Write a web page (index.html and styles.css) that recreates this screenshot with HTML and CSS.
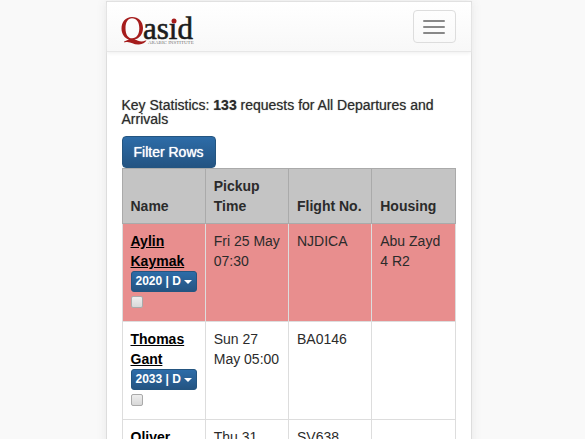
FILE: index.html
```html
<!DOCTYPE html>
<html lang="en">
<head>
<meta charset="utf-8">
<meta name="viewport" content="width=device-width, initial-scale=1">
<title>Qasid – Departures and Arrivals</title>
<link rel="stylesheet" href="styles.css">
</head>
<body>
<div class="page">
  <header class="navbar">
    <a class="brand" href="#" aria-label="Qasid Arabic Institute">
      <svg class="logo" viewBox="0 0 76 34" aria-hidden="true">
        <path class="logo-red" fill-rule="evenodd" d="M11 3C4.500 3 0.500 8 0.500 14.500C0.500 20 3.500 24.300 8 25.500C6 26 5 27 3 27.500L3.500 28.500C9 26.500 12 31 18 30.500C21.500 30.200 24 28.500 25.500 26.500L24.500 26.500C20 29 17 26.500 13.500 25.500C18.500 24.500 22 20 22 14C22 7.500 17.500 3 11 3ZM11 4.300C15.500 4.300 18.300 8 18.300 14.300C18.300 20.500 15.500 24.300 11.200 24.300C7 24.300 4.500 20.500 4.500 14.200C4.500 8 7 4.300 11 4.300Z"/>
        <text class="logo-name" x="22" y="25">asıd</text>
        <circle class="logo-red" cx="53" cy="7" r="2.500"/>
        <text class="logo-sub" x="27" y="30">ARABIC INSTITUTE</text>
      </svg>
    </a>
    <button class="toggle" type="button" aria-label="Toggle navigation">
      <span class="bar"></span><span class="bar"></span><span class="bar"></span>
    </button>
  </header>
  <main class="content">
    <h5 class="stats">Key Statistics: <strong>133</strong> requests for All Departures and Arrivals</h5>
    <button class="btn" type="button">Filter Rows</button>
    <table class="requests">
      <thead>
        <tr><th>Name</th><th>Pickup Time</th><th>Flight No.</th><th>Housing</th></tr>
      </thead>
      <tbody>
        <tr class="alert">
          <td><a class="name" href="#">Aylin Kaymak</a>
            <button class="btn btn-small" type="button">2020 | D <span class="caret"></span></button>
            <input class="check" type="checkbox" aria-label="Select Aylin Kaymak"></td>
          <td>Fri 25 May 07:30</td><td>NJDICA</td><td>Abu Zayd 4 R2</td>
        </tr>
        <tr>
          <td><a class="name" href="#">Thomas Gant</a>
            <button class="btn btn-small" type="button">2033 | D <span class="caret"></span></button>
            <input class="check" type="checkbox" aria-label="Select Thomas Gant"></td>
          <td>Sun 27 May 05:00</td><td>BA0146</td><td></td>
        </tr>
        <tr>
          <td><a class="name" href="#">Oliver</a></td>
          <td>Thu 31</td><td>SV638</td><td></td>
        </tr>
      </tbody>
    </table>
  </main>
</div>
</body>
</html>
```
FILE: styles.css
```css
* { box-sizing: border-box; }

html { height: 100%; overflow: hidden; }

body {
  height: 100%;
  margin: 0;
  padding: 1px 8px 0 0;
  overflow: hidden;
  background: #f9f9f9;
  color: #2b2b2b;
  font: 14px/20px "Liberation Sans", Arial, sans-serif;
}

.page {
  max-width: 366px;
  min-height: 100%;
  margin: 0 auto;
  background: #fff;
  border: 1px solid #ddd;
  box-shadow: 0 0 10px #e8e8e8;
}

.navbar {
  display: flex;
  justify-content: space-between;
  align-items: center;
  height: 50px;
  padding: 0 15px 0 14px;
  background: linear-gradient(#fff, #f8f8f8);
  border-bottom: 1px solid #e7e7e7;
  box-shadow: 0 1px 4px #eee;
}

.brand { display: block; padding-top: 9px; }
.logo { display: block; width: 76px; height: 34px; overflow: visible; }
.logo-red { fill: #a51c1c; }
.logo-name { font: 31px "Liberation Serif", serif; fill: #1c1c1c; stroke: #1c1c1c; stroke-width: 0.6; }
.logo-sub { font: 5px "Liberation Serif", serif; fill: #777; }

.toggle {
  display: flex;
  flex-direction: column;
  justify-content: center;
  align-items: center;
  gap: 4px;
  width: 43px;
  height: 33px;
  padding: 0;
  background: transparent;
  border: 1px solid #ddd;
  border-radius: 4px;
}

.bar { width: 22px; height: 2px; border-radius: 1px; background: #888; }

.content { padding: 46px 15px 0; }

.stats {
  margin: 0 0 10px;
  font-size: 14px;
  font-weight: 500;
  line-height: 14px;
  text-shadow: 0 0 1px #888;
}

.btn {
  display: block;
  padding: 6px 11px;
  color: #fff;
  font: 14px/18px "Liberation Sans", Arial, sans-serif;
  white-space: nowrap;
  text-shadow: 0 0 1px #fff;
  background: linear-gradient(#2d6ca8, #245482);
  border: 1px solid #245580;
  border-radius: 4px;
}

.btn-small {
  padding: 1px 4px;
  font-size: 12px;
  font-weight: bold;
  line-height: 17px;
  text-shadow: none;
  border-radius: 3px;
}

.caret {
  display: inline-block;
  border: 4px solid transparent;
  border-top-color: #fff;
  border-bottom: 0;
  vertical-align: middle;
}

.requests {
  width: 100%;
  table-layout: fixed;
  border-collapse: collapse;
}

th, td {
  padding: 7px 8px;
  border: 1px solid #ddd;
  text-align: left;
  vertical-align: top;
}

th {
  vertical-align: bottom;
  background: #c4c4c4;
  border-color: #aaa;
}

.alert td { background: #e88e8e; }

.name { color: #000; font-weight: bold; text-decoration: underline; }

.check {
  appearance: none;
  display: block;
  width: 12px;
  height: 12px;
  margin: 4px 0 6px;
  background: linear-gradient(#eee, #d8d8d8);
  border: 1px solid #aaa;
  border-radius: 2px;
}
```
